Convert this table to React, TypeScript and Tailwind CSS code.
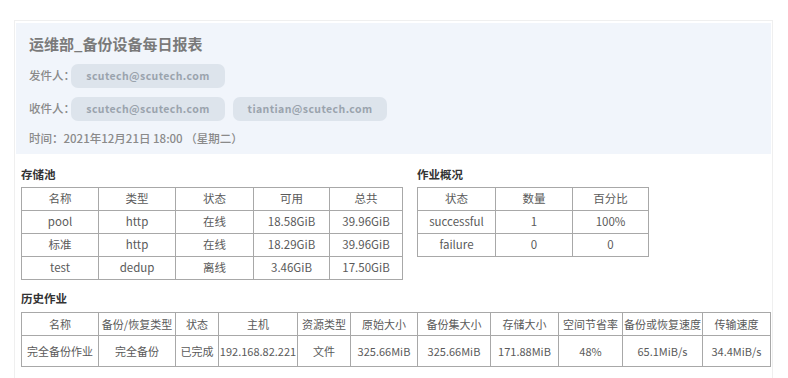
const font = { fontFamily: '"Noto Sans CJK SC", "Noto Sans", sans-serif' }

const pools = [
  ['pool', 'http', '在线', '18.58GiB', '39.96GiB'],
  ['标准', 'http', '在线', '18.29GiB', '39.96GiB'],
  ['test', 'dedup', '离线', '3.46GiB', '17.50GiB'],
]

const jobs = [
  ['successful', '1', '100%'],
  ['failure', '0', '0'],
]

const historyHead = ['名称', '备份/恢复类型', '状态', '主机', '资源类型', '原始大小', '备份集大小', '存储大小', '空间节省率', '备份或恢复速度', '传输速度']
const historyWidths = ['w-[77px]', 'w-[77px]', 'w-[43px]', 'w-[79px]', 'w-[53px]', 'w-[67px]', 'w-[73px]', 'w-[68px]', 'w-[64px]', 'w-[80px]', 'w-[68px]']
const historyRow = ['完全备份作业', '完全备份', '已完成', '192.168.82.221', '文件', '325.66MiB', '325.66MiB', '171.88MiB', '48%', '65.1MiB/s', '34.4MiB/s']

function Pill({ children }: { children: string }) {
  return (
    <span className="inline-flex shrink-0 items-center justify-center w-[154px] h-[24px] rounded-[7px] bg-[#dde4ec] text-[10.5px] font-semibold text-[#9aa3ad] tracking-[0.4px]">
      {children}
    </span>
  )
}

const cell = 'border border-[#a8a8a8] text-center font-normal p-0 whitespace-nowrap overflow-hidden'

export default function App() {
  return (
    <div className="w-[788px] h-[378px] bg-white overflow-hidden text-[#5a5a5a]" style={font}>
      <div className="ml-[14px] mt-[20px] w-[759px] h-[400px] border border-[#efefef] pt-[2px] px-[1px]">
        {/* Header band */}
        <div className="bg-[#f1f5fb] h-[131px] pl-[13px] pt-[11px]">
          <h1 className="text-[15px] font-semibold text-[#7a7a7a] leading-[20px]">运维部_备份设备每日报表</h1>
          <div className="flex items-center mt-[10px] text-[11.5px] font-medium text-[#8a8a8a]">
            <span className="w-[42px] shrink-0 whitespace-nowrap">发件人：</span>
            <Pill>scutech@scutech.com</Pill>
          </div>
          <div className="flex items-center mt-[9px] text-[11.5px] font-medium text-[#8a8a8a]">
            <span className="w-[42px] shrink-0 whitespace-nowrap">收件人：</span>
            <Pill>scutech@scutech.com</Pill>
            <span className="w-[8px]" />
            <Pill>tiantian@scutech.com</Pill>
          </div>
          <div className="mt-[8px] text-[11.5px] font-medium text-[#8a8a8a] leading-[18px] whitespace-nowrap">时间：2021年12月21日 18:00 （星期二）</div>
        </div>

        {/* Storage pool + job overview */}
        <div className="flex pl-[5px] pt-[12px]">
          <div className="w-[396px]">
            <div className="text-[11.5px] font-bold text-[#333] leading-[16px] mb-[5px]">存储池</div>
            <table className="border-collapse table-fixed text-[11.5px]">
              <thead>
                <tr className="h-[23px]">
                  {['名称', '类型', '状态', '可用', '总共'].map((h, i) => (
                    <th key={h} className={`${cell} ${['w-[77px]', 'w-[77px]', 'w-[78px]', 'w-[76px]', 'w-[73px]'][i]}`}>{h}</th>
                  ))}
                </tr>
              </thead>
              <tbody>
                {pools.map((r) => (
                  <tr key={r[0]} className="h-[23px]">
                    {r.map((c, i) => (
                      <td key={i} className={cell}>{c}</td>
                    ))}
                  </tr>
                ))}
              </tbody>
            </table>
          </div>
          <div>
            <div className="text-[11.5px] font-bold text-[#333] leading-[16px] mb-[5px]">作业概况</div>
            <table className="border-collapse table-fixed text-[11.5px]">
              <thead>
                <tr className="h-[23px]">
                  {['状态', '数量', '百分比'].map((h, i) => (
                    <th key={h} className={`${cell} ${['w-[78px]', 'w-[77px]', 'w-[76px]'][i]}`}>{h}</th>
                  ))}
                </tr>
              </thead>
              <tbody>
                {jobs.map((r) => (
                  <tr key={r[0]} className="h-[23px]">
                    {r.map((c, i) => (
                      <td key={i} className={cell}>{c}</td>
                    ))}
                  </tr>
                ))}
              </tbody>
            </table>
          </div>
        </div>

        {/* History */}
        <div className="pl-[5px] pt-[10px]">
          <div className="text-[11.5px] font-bold text-[#333] leading-[16px] mb-[6px]">历史作业</div>
          <table className="border-collapse table-fixed w-[750px] text-[11px]">
            <thead>
              <tr className="h-[23px]">
                {historyHead.map((h, i) => (
                  <th key={h} className={`${cell} ${historyWidths[i]}`}>{h}</th>
                ))}
              </tr>
            </thead>
            <tbody>
              <tr className="h-[31px]">
                {historyRow.map((c, i) => (
                  <td key={i} className={cell}>{c}</td>
                ))}
              </tr>
            </tbody>
          </table>
        </div>
      </div>
    </div>
  )
}
